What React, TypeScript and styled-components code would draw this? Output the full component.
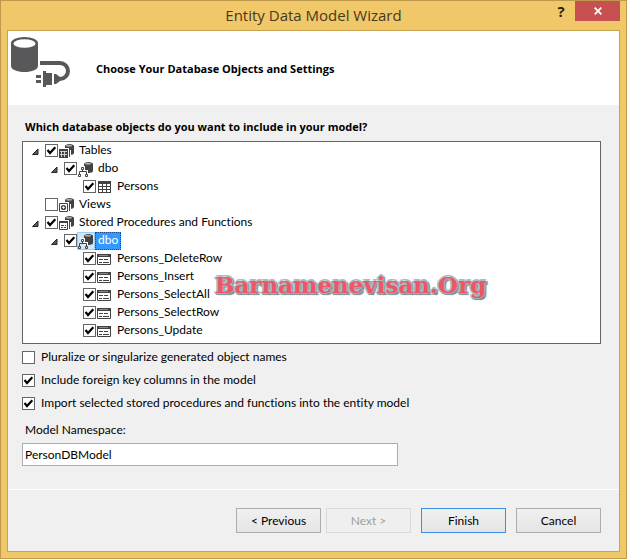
import React, { useState } from "react";
import styled, { createGlobalStyle, css } from "styled-components";

const GlobalStyle = createGlobalStyle`
  *, *::before, *::after { box-sizing: border-box; }
  body { margin: 0; }
  button, input { font: inherit; color: inherit; }
`;

const headingFont = `700 11px/18px "Open Sans", "Noto Sans", sans-serif`;

const Window = styled.div`
  display: flex;
  flex-direction: column;
  min-height: 100vh;
  padding: 0 6px 6px;
  border: 1px solid #bd9a4c;
  background: #f0c869;
  color: #000;
  font: 12px/18px Lato, "Open Sans", sans-serif;
  font-variant-ligatures: none;
`;

const TitleBar = styled.header`
  display: grid;
  grid-template-columns: 1fr auto 1fr;
  height: 29px;
  font-family: "Open Sans", "Noto Sans", sans-serif;
`;

const Title = styled.h1`
  grid-column: 2;
  margin: 0;
  color: #46391c;
  font-size: 15px;
  font-weight: 400;
  line-height: 29px;
`;

const TitleActions = styled.div`
  display: flex;
  justify-content: flex-end;
  align-items: flex-start;
`;

const HelpButton = styled.button`
  width: 28px;
  height: 20px;
  padding: 0;
  border: 0;
  background: none;
  color: #2b210c;
  font-size: 15px;
  font-weight: 700;
  line-height: 20px;
`;

const CloseButton = styled.button`
  display: grid;
  place-items: center;
  width: 45px;
  height: 20px;
  padding: 0;
  border: 0;
  background: #c75050;
`;

const Client = styled.main`
  display: flex;
  flex: 1;
  flex-direction: column;
  border: 1px solid #c9a450;
  background: #f0f0f0;
`;

const Banner = styled.div`
  display: flex;
  align-items: center;
  gap: 24px;
  height: 74px;
  padding: 0 2px;
  background: #fff;
`;

const BannerArt = styled.svg`
  width: 62px;
  height: 74px;
  color: #58585a;
`;

const BannerTitle = styled.h2`
  margin: 0;
  padding-top: 2px;
  font: ${headingFont};
`;

const Content = styled.section`
  display: flex;
  flex: 1;
  flex-direction: column;
  align-items: stretch;
  padding: 13px 18px 0 14px;
`;

const Question = styled.h3`
  margin: 0;
  padding: 0 3px 5px;
  font: ${headingFont};
`;

const TreePanel = styled.div`
  position: relative;
  min-height: 203px;
  border: 1px solid #646464;
  background: #fff;
`;

const Tree = styled.ul`
  margin: 0;
  padding: 0 0 0 9px;
  list-style: none;
`;

const Branch = styled.ul`
  margin: 0;
  padding: 0 0 0 19px;
  list-style: none;
`;

const Row = styled.div`
  display: flex;
  height: 18px;
`;

const Expander = styled.button`
  display: flex;
  align-items: center;
  width: 13px;
  height: 18px;
  padding: 0;
  border: 0;
  background: none;
`;

const ExpanderSpace = styled.span`
  width: 13px;
`;

const tick = `url("data:image/svg+xml,%3Csvg xmlns='http://www.w3.org/2000/svg' viewBox='0 0 11 11'%3E%3Cpath d='M1.5 5 4 8 9.3 2.2' fill='none' stroke='black' stroke-width='2.2'/%3E%3C/svg%3E")`;

const CheckBox = styled.input`
  appearance: none;
  flex: none;
  width: 13px;
  height: 13px;
  margin: 0;
  border: 1px solid #666;
  background: #fff;

  &:checked {
    background: #fff ${tick} center / 11px 11px no-repeat;
  }
`;

const TreeCheckBox = styled(CheckBox)`
  margin-top: 2px;
`;

const NodeLabel = styled.label<{ $selected?: boolean }>`
  display: flex;

  ${({ $selected }) =>
    $selected &&
    css`
      color: #fff;
      svg { background: #cfe7fb; outline: 1px solid #9fcdf4; outline-offset: -1px; }
      span { background: #3399ff; outline: 1px dotted #1c4a80; outline-offset: -1px; }
    `}
`;

const NodeSvg = styled.svg`
  width: 18px;
  height: 18px;
  color: #424242;
`;

const NodeText = styled.span`
  padding: 0 3px;
  line-height: 16px;
`;

const Watermark = styled.span`
  position: absolute;
  top: 125px;
  left: 192px;
  color: #ef5665;
  font: 700 23px/36px "DejaVu Serif", serif;
  white-space: nowrap;
  pointer-events: none;
  -webkit-text-stroke: 3px #fdf0f2;
  paint-order: stroke fill;
  text-shadow:
    0 -2px 0 #a9bac2,
    -2px 0 0 #a9bac2,
    -1px 1px 0 #9db1ba,
    2px 0 0 #8ba3ad,
    0 2px 0 #7d99a4,
    2px 2px 1px #5c7f8c;
`;

const Options = styled.div`
  display: flex;
  flex-direction: column;
  align-items: flex-start;
  gap: 5px;
  padding-top: 4px;
`;

const Option = styled.label`
  display: flex;
  align-items: center;
  gap: 6px;
`;

const FieldLabel = styled.label`
  padding: 9px 3px 4px;
`;

const TextField = styled.input`
  width: 65%;
  height: 23px;
  padding: 0 2px;
  border: 1px solid #abadb3;
  background: #fff;
`;

const Footer = styled.footer`
  display: flex;
  justify-content: flex-end;
  gap: 10px;
  padding: 18px;
  border-top: 1px solid #fff;
`;

const ButtonPair = styled.div`
  display: flex;
  gap: 5px;
`;

const PushButton = styled.button<{ $primary?: boolean }>`
  width: 85px;
  height: 25px;
  padding: 0;
  border: 1px solid ${({ $primary }) => ($primary ? "#3c8ee0" : "#acacac")};
  background: linear-gradient(#f0f0f0, #e5e5e5);

  &:disabled {
    border-color: #d9d9d9;
    background: #efefef;
    color: #a0a0a0;
  }
`;

type IconKind = "tables" | "schema" | "table" | "views" | "procs" | "proc";

function Cylinder() {
  return (
    <>
      <path d="M7 4c0-1 2-2 4.500-2S16 3 16 4v7c0 1-2 2-4.500 2S7 12 7 11z" fill="currentColor" />
      <ellipse cx="11" cy="3.800" rx="3.200" ry="1" fill="#a8a8a8" />
    </>
  );
}

function NodeIcon({ kind }: { kind: IconKind }) {
  return (
    <NodeSvg viewBox="0 0 18 18" aria-hidden="true">
      {kind !== "table" && kind !== "proc" && <Cylinder />}
      {kind === "tables" && (
        <>
          <path d="M0 6h11v11H0z" fill="#fff" />
          <path d="M1 7h9v9H1z" fill="currentColor" />
          <path d="M2 9.500h7M2 12.500h7M3.500 9v6M6.500 9v6" stroke="#ddd" strokeWidth="0.900" />
          <path d="M11.500 8v7" fill="none" stroke="currentColor" />
          <path d="M12.500 8v6" fill="none" stroke="#fff" />
        </>
      )}
      {kind === "views" && (
        <>
          <path d="M0 6h11v11H0z" fill="#fff" />
          <path d="M1.500 7.500h8v8h-8z" fill="#fff" stroke="currentColor" />
          <circle cx="5.500" cy="11.500" r="2.600" fill="currentColor" />
          <path d="M4 11.500h3M5.500 10v3" stroke="#fff" strokeWidth="0.800" />
          <path d="M11.500 7v8" fill="none" stroke="currentColor" />
          <path d="M12.500 8v6" fill="none" stroke="#fff" />
        </>
      )}
      {kind === "procs" && (
        <>
          <path d="M0 6h11v11H0z" fill="#fff" />
          <path d="M1.500 7.500h8v8h-8z" fill="#fff" stroke="currentColor" />
          <path d="M1 7h9v2H1z" fill="currentColor" />
          <path d="M3 11.500h3M7 11.500h1M3 13.500h2M6 13.500h2" stroke="currentColor" />
          <path d="M11.500 7v8" fill="none" stroke="currentColor" />
          <path d="M12.500 8v6" fill="none" stroke="#fff" />
        </>
      )}
      {kind === "schema" && (
        <>
          <path d="M3 6h5v4h3v3H7z" fill="#fff" />
          <path
            d="M4.500 7.500h2v2h-2zM1.500 14.500h2v2h-2zM8.500 14.500h2v2h-2zM5.500 10v2M2.500 14v-2.500h7V14"
            fill="none"
            stroke="currentColor"
          />
        </>
      )}
      {kind === "table" && (
        <>
          <path d="M2 3h13v12H2z" fill="currentColor" />
          <path
            d="M3 6h3v2H3zM7 6h3v2H7zM11 6h3v2h-3zM3 9h3v2H3zM7 9h3v2H7zM11 9h3v2h-3zM3 12h3v2H3zM7 12h3v2H7zM11 12h3v2h-3z"
            fill="#fff"
          />
        </>
      )}
      {kind === "proc" && (
        <>
          <path d="M1.500 4.500h13v10h-13z" fill="#fff" stroke="currentColor" />
          <path d="M1 4h14v3H1z" fill="currentColor" />
          <path d="M3 5.500h9" stroke="#8a8a8a" />
          <path d="M3 9.500h4M8 9.500h4M3 12.500h3M7 12.500h6" stroke="currentColor" />
        </>
      )}
    </NodeSvg>
  );
}

interface TreeNode {
  name: string;
  icon: IconKind;
  checked: boolean;
  selected?: boolean;
  children?: TreeNode[];
}

const proc = (name: string): TreeNode => ({ name, icon: "proc", checked: true });

const nodes: TreeNode[] = [
  {
    name: "Tables",
    icon: "tables",
    checked: true,
    children: [
      {
        name: "dbo",
        icon: "schema",
        checked: true,
        children: [{ name: "Persons", icon: "table", checked: true }],
      },
    ],
  },
  { name: "Views", icon: "views", checked: false },
  {
    name: "Stored Procedures and Functions",
    icon: "procs",
    checked: true,
    children: [
      {
        name: "dbo",
        icon: "schema",
        checked: true,
        selected: true,
        children: [
          proc("Persons_DeleteRow"),
          proc("Persons_Insert"),
          proc("Persons_SelectAll"),
          proc("Persons_SelectRow"),
          proc("Persons_Update"),
        ],
      },
    ],
  },
];

function TreeItem({ node, path }: { node: TreeNode; path: string }) {
  const [open, setOpen] = useState(true);
  const id = `${path}-${node.name}`.replace(/\s/g, "-");
  return (
    <li>
      <Row>
        {node.children ? (
          <Expander
            type="button"
            aria-expanded={open}
            aria-label={`Toggle ${node.name}`}
            onClick={() => setOpen(!open)}
          >
            <svg width="7" height="14" viewBox="0 0 7 14" aria-hidden="true">
              <path d={open ? "M6 5v5.500H.5z" : "M1 4l4 3.500-4 3.500z"} fill="#595959" stroke="#262626" />
            </svg>
          </Expander>
        ) : (
          <ExpanderSpace />
        )}
        <TreeCheckBox type="checkbox" id={id} defaultChecked={node.checked} />
        <NodeLabel htmlFor={id} $selected={node.selected}>
          <NodeIcon kind={node.icon} />
          <NodeText>{node.name}</NodeText>
        </NodeLabel>
      </Row>
      {node.children && open && (
        <Branch>
          {node.children.map((child) => (
            <TreeItem key={child.name} node={child} path={id} />
          ))}
        </Branch>
      )}
    </li>
  );
}

function DatabasePlug() {
  return (
    <BannerArt viewBox="0 0 62 74" aria-hidden="true">
      <path d="M1 12v23c0 3.500 6 6 13.500 6S28 38.500 28 35V12z" fill="currentColor" />
      <ellipse cx="14.500" cy="12" rx="13.500" ry="6" fill="currentColor" />
      <ellipse cx="14.500" cy="12.500" rx="11" ry="4.300" fill="#fff" />
      <path d="M30 32h20a8 8 0 0 1 0 16h-2" fill="none" stroke="currentColor" strokeWidth="4" />
      <path d="M26 44h5v3h-5zM26 49h5v3h-5zM33 40h3v2h6v12h-6v2h-3zM44 43h2l4 3v4l-4 3h-2z" fill="currentColor" />
    </BannerArt>
  );
}

export default function App() {
  return (
    <>
      <GlobalStyle />
      <Window>
        <TitleBar>
          <Title>Entity Data Model Wizard</Title>
          <TitleActions>
            <HelpButton type="button" aria-label="Help">?</HelpButton>
            <CloseButton type="button" aria-label="Close">
              <svg width="8" height="8" viewBox="0 0 8 8" aria-hidden="true">
                <path d="M.7.7l6.600 6.600M7.300.7L.7 7.300" stroke="#fff" strokeWidth="1.800" />
              </svg>
            </CloseButton>
          </TitleActions>
        </TitleBar>
        <Client>
          <Banner>
            <DatabasePlug />
            <BannerTitle>Choose Your Database Objects and Settings</BannerTitle>
          </Banner>
          <Content>
            <Question>Which database objects do you want to include in your model?</Question>
            <TreePanel>
              <Tree>
                {nodes.map((node) => (
                  <TreeItem key={node.name} node={node} path="node" />
                ))}
              </Tree>
              <Watermark>Barnamenevisan.Org</Watermark>
            </TreePanel>
            <Options>
              <Option>
                <CheckBox type="checkbox" />
                Pluralize or singularize generated object names
              </Option>
              <Option>
                <CheckBox type="checkbox" defaultChecked />
                Include foreign key columns in the model
              </Option>
              <Option>
                <CheckBox type="checkbox" defaultChecked />
                Import selected stored procedures and functions into the entity model
              </Option>
            </Options>
            <FieldLabel htmlFor="namespace">Model Namespace:</FieldLabel>
            <TextField id="namespace" type="text" defaultValue="PersonDBModel" />
          </Content>
          <Footer>
            <ButtonPair>
              <PushButton type="button">&lt; Previous</PushButton>
              <PushButton type="button" disabled>Next &gt;</PushButton>
            </ButtonPair>
            <PushButton type="submit" $primary>Finish</PushButton>
            <PushButton type="button">Cancel</PushButton>
          </Footer>
        </Client>
      </Window>
    </>
  );
}
